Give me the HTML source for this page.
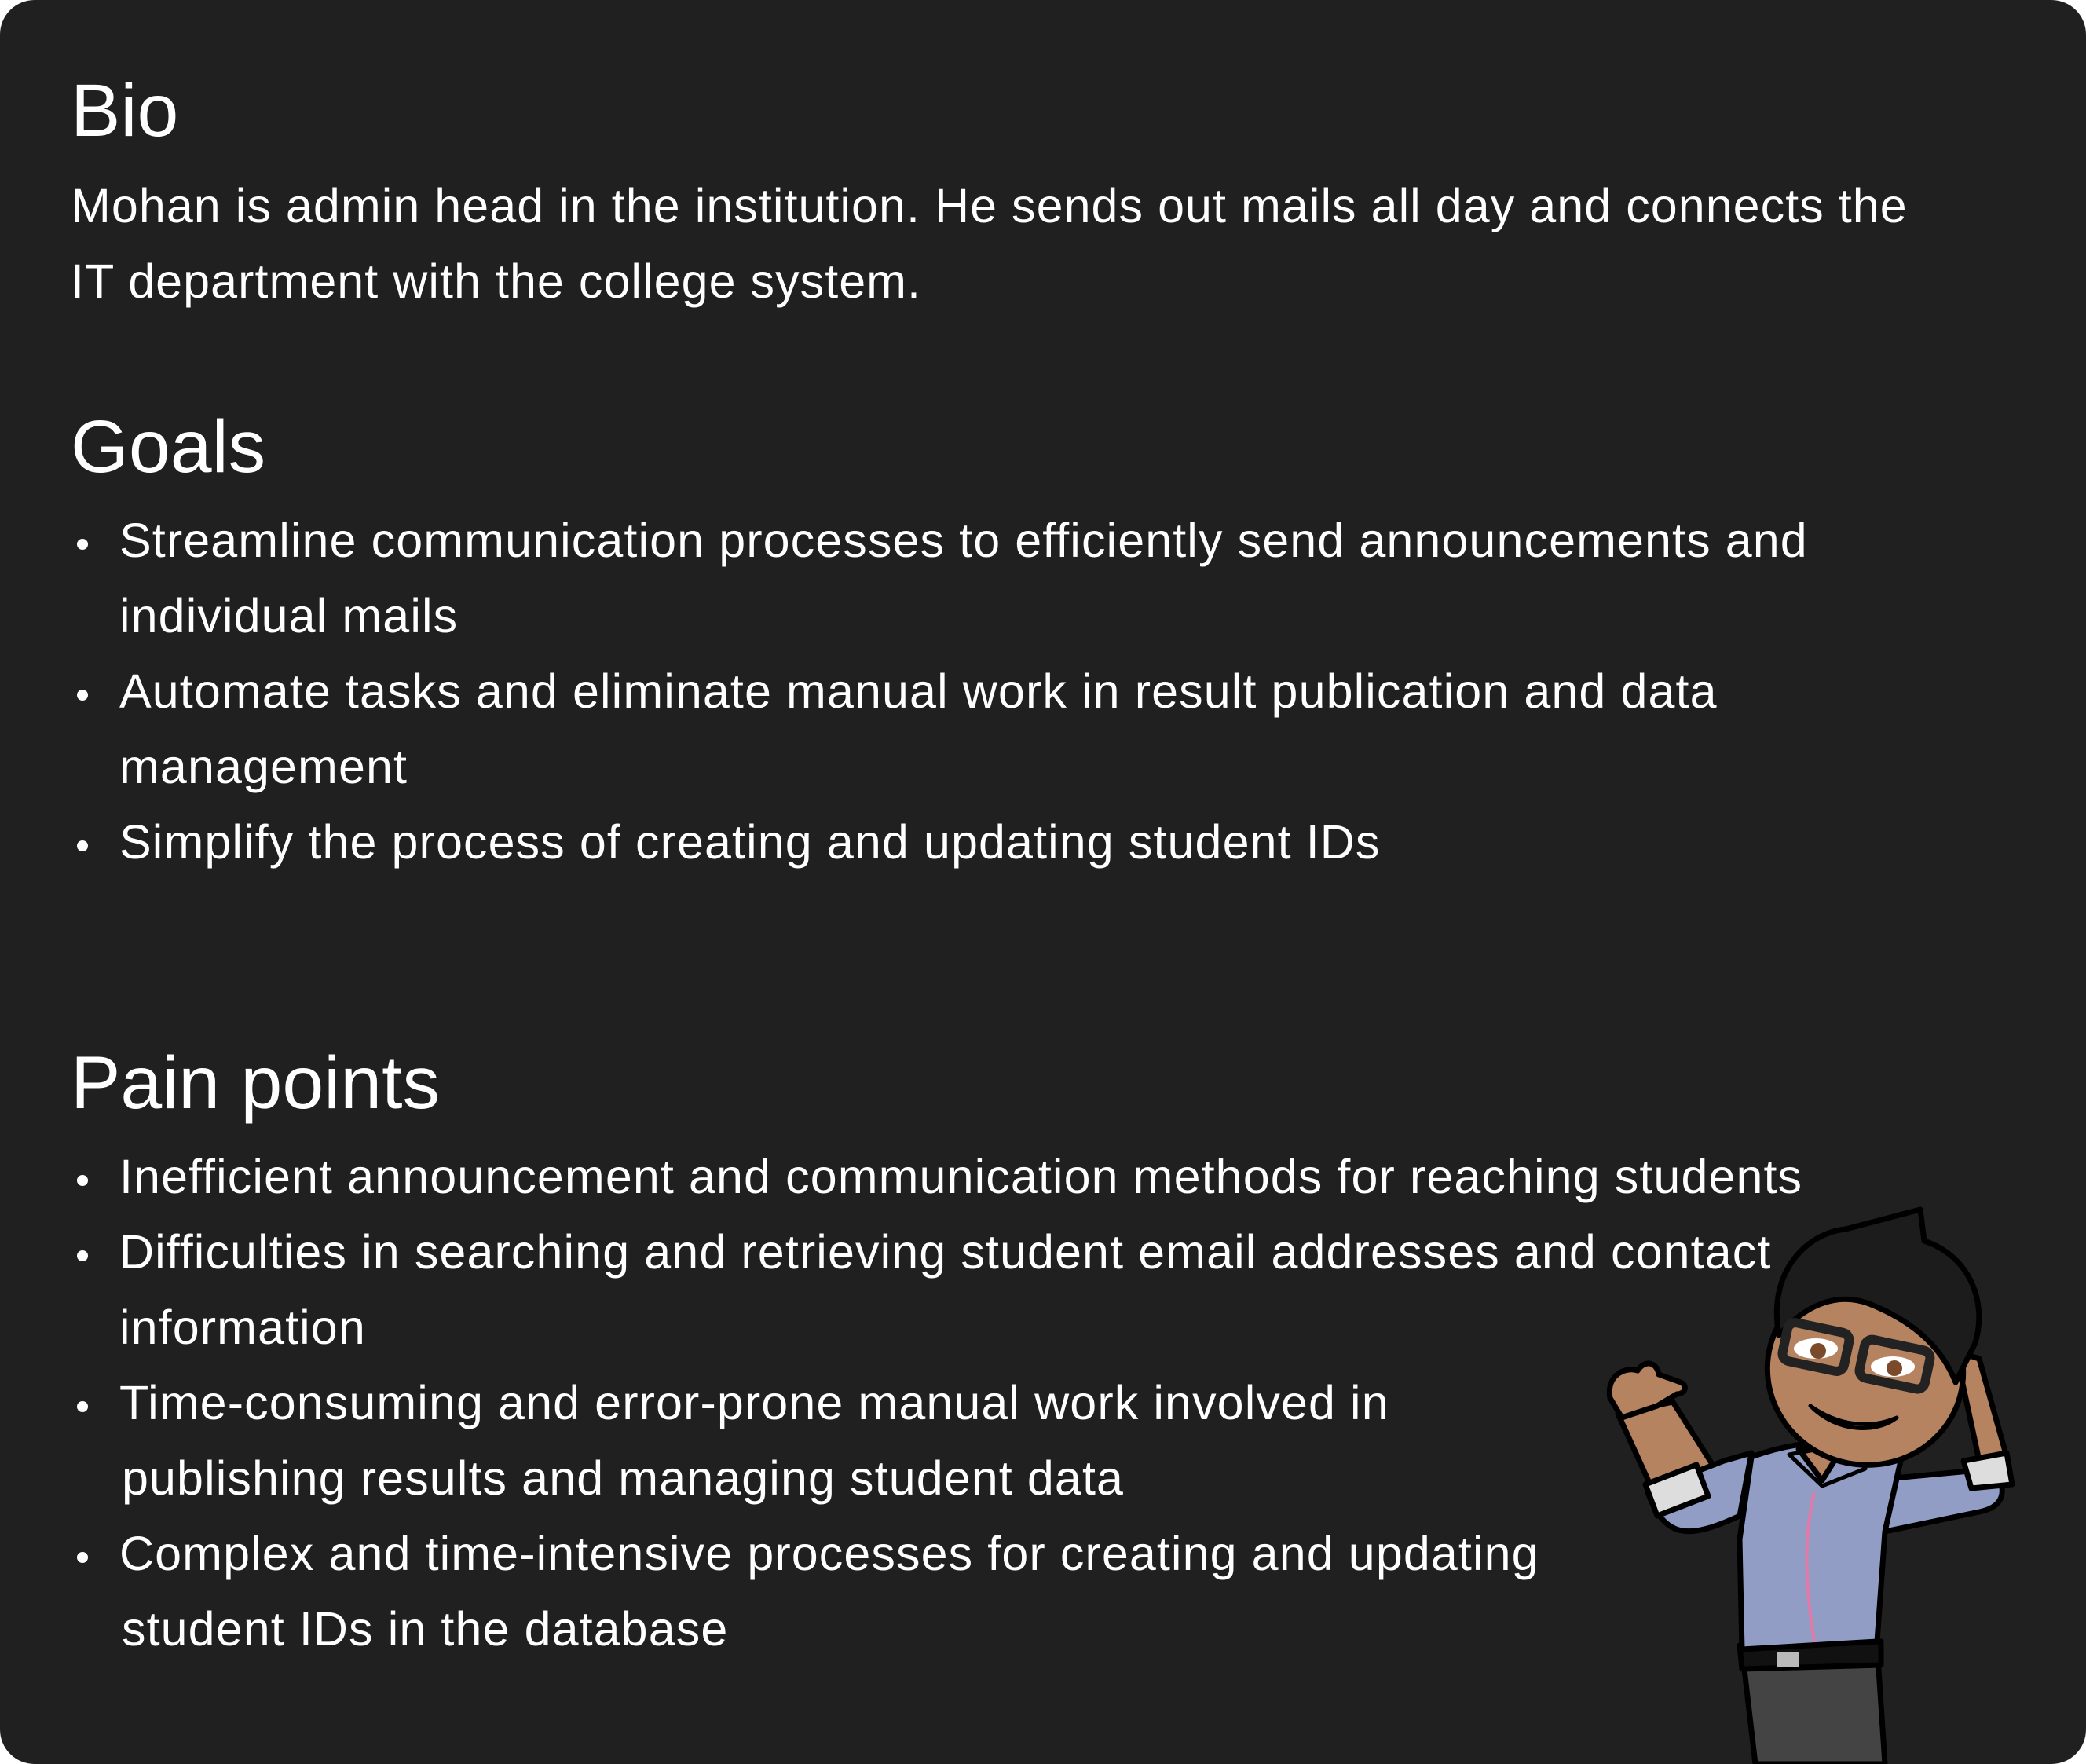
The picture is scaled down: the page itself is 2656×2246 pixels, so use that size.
<!DOCTYPE html>
<html><head><meta charset="utf-8"><style>
html,body{margin:0;padding:0;background:#fff;}
.card{position:absolute;left:0;top:0;width:2656px;height:2246px;background:#202020;border-radius:44px;overflow:hidden;font-family:"Liberation Sans",sans-serif;color:#fff;}
.h{position:absolute;left:90px;font-size:95px;line-height:95px;white-space:nowrap;}
.t{position:absolute;left:90px;font-size:61px;line-height:96px;white-space:nowrap;letter-spacing:1.05px;}
.l{position:absolute;left:0;font-size:61px;line-height:96px;white-space:nowrap;letter-spacing:1.1px;}
.l div{position:relative;padding-left:152px;}
.l div.b::before{content:"";position:absolute;left:98px;top:46px;width:14px;height:14px;border-radius:50%;background:#fff;}
.l div.c{padding-left:155px;}
</style></head><body>
<div class="card">
<div class="h" style="top:94px">Bio</div>
<div class="t" style="top:214px">Mohan is admin head in the institution. He sends out mails all day and connects the<br>IT department with the college system.</div>
<div class="h" style="top:522px">Goals</div>
<div class="l" style="top:640px">
<div class="b">Streamline communication processes to efficiently send announcements and</div>
<div>individual mails</div>
<div class="b">Automate tasks and eliminate manual work in result publication and data</div>
<div>management</div>
<div class="b">Simplify the process of creating and updating student IDs</div>
</div>
<div class="h" style="top:1332px">Pain points</div>
<div class="l" style="top:1450px">
<div class="b">Inefficient announcement and communication methods for reaching students</div>
<div class="b">Difficulties in searching and retrieving student email addresses and contact</div>
<div>information</div>
<div class="b">Time-consuming and error-prone manual work involved in</div>
<div class="c">publishing results and managing student data</div>
<div class="b">Complex and time-intensive processes for creating and updating</div>
<div class="c">student IDs in the database</div>
</div>
<svg style="position:absolute;left:0;top:0" width="2656" height="2246" viewBox="0 0 2656 2246">
<g stroke="#000" stroke-width="7" stroke-linejoin="round">
<path d="M2218 2100 L2390 2095 L2400 2246 L2235 2246 Z" fill="#444"/>
<path d="M2215 2095 L2395 2090 L2395 2120 L2218 2125 Z" fill="#111"/>
<rect x="2262" y="2104" width="28" height="18" fill="#bbb" stroke="none"/>
<path d="M2060 1800 L2110 1910 L2190 1880 L2130 1785 Z" fill="#b5835f"/>
<path d="M2050 1780 C2045 1750 2070 1740 2085 1745 C2095 1730 2110 1735 2112 1750 L2140 1760 C2150 1765 2145 1775 2135 1775 L2110 1790 L2065 1805 Z" fill="#b5835f"/>
<path d="M2098 1900 C2120 1960 2150 1960 2215 1930 L2230 1850 L2195 1860 L2105 1895 Z" fill="#919dc4"/>
<path d="M2095 1890 L2160 1865 L2175 1905 L2110 1930 Z" fill="#ddd"/>
<path d="M2490 1720 L2520 1860 L2555 1855 L2520 1730 Z" fill="#b5835f"/>
<path d="M2380 1885 L2540 1870 C2560 1905 2545 1920 2520 1925 L2400 1950 Z" fill="#919dc4"/>
<path d="M2500 1860 L2555 1850 L2562 1890 L2510 1895 Z" fill="#ddd"/>
<path d="M2230 1855 C2300 1830 2360 1830 2420 1860 L2400 1950 L2390 2090 L2218 2100 L2215 1960 Z" fill="#919dc4"/>
<path d="M2290 1845 L2320 1885 L2345 1845 Z" fill="#b5835f"/>
<path d="M2278 1852 L2320 1892 L2375 1870 L2370 1835 Z" fill="none" stroke-width="5"/>
<path d="M2310 1900 C2295 1960 2300 2030 2310 2090" fill="none" stroke="#e07aa8" stroke-width="4"/>
<ellipse cx="2375" cy="1745" rx="125" ry="120" fill="#b5835f" transform="rotate(15 2375 1745)"/>
<path d="M2265 1700 C2250 1620 2300 1570 2350 1565 L2445 1540 L2450 1580 C2510 1600 2530 1660 2515 1710 L2490 1760 C2470 1710 2430 1680 2380 1660 C2340 1645 2300 1660 2265 1700 Z" fill="#1c1c1c"/>
<rect x="2272" y="1690" width="80" height="50" rx="10" fill="none" stroke="#222" stroke-width="12" transform="rotate(12 2312 1715)"/>
<rect x="2370" y="1712" width="85" height="50" rx="10" fill="none" stroke="#222" stroke-width="12" transform="rotate(12 2412 1737)"/>
<ellipse cx="2312" cy="1717" rx="28" ry="13" fill="#fff" stroke="none"/>
<ellipse cx="2410" cy="1740" rx="28" ry="13" fill="#fff" stroke="none"/>
<circle cx="2315" cy="1720" r="10" fill="#7a4a2a" stroke="none"/>
<circle cx="2412" cy="1742" r="10" fill="#7a4a2a" stroke="none"/>
<path d="M2305 1790 C2340 1815 2380 1820 2415 1805 C2390 1825 2340 1825 2305 1790 Z" fill="#fff" stroke-width="5"/>
</g>
</svg>
</div>
</body></html>
